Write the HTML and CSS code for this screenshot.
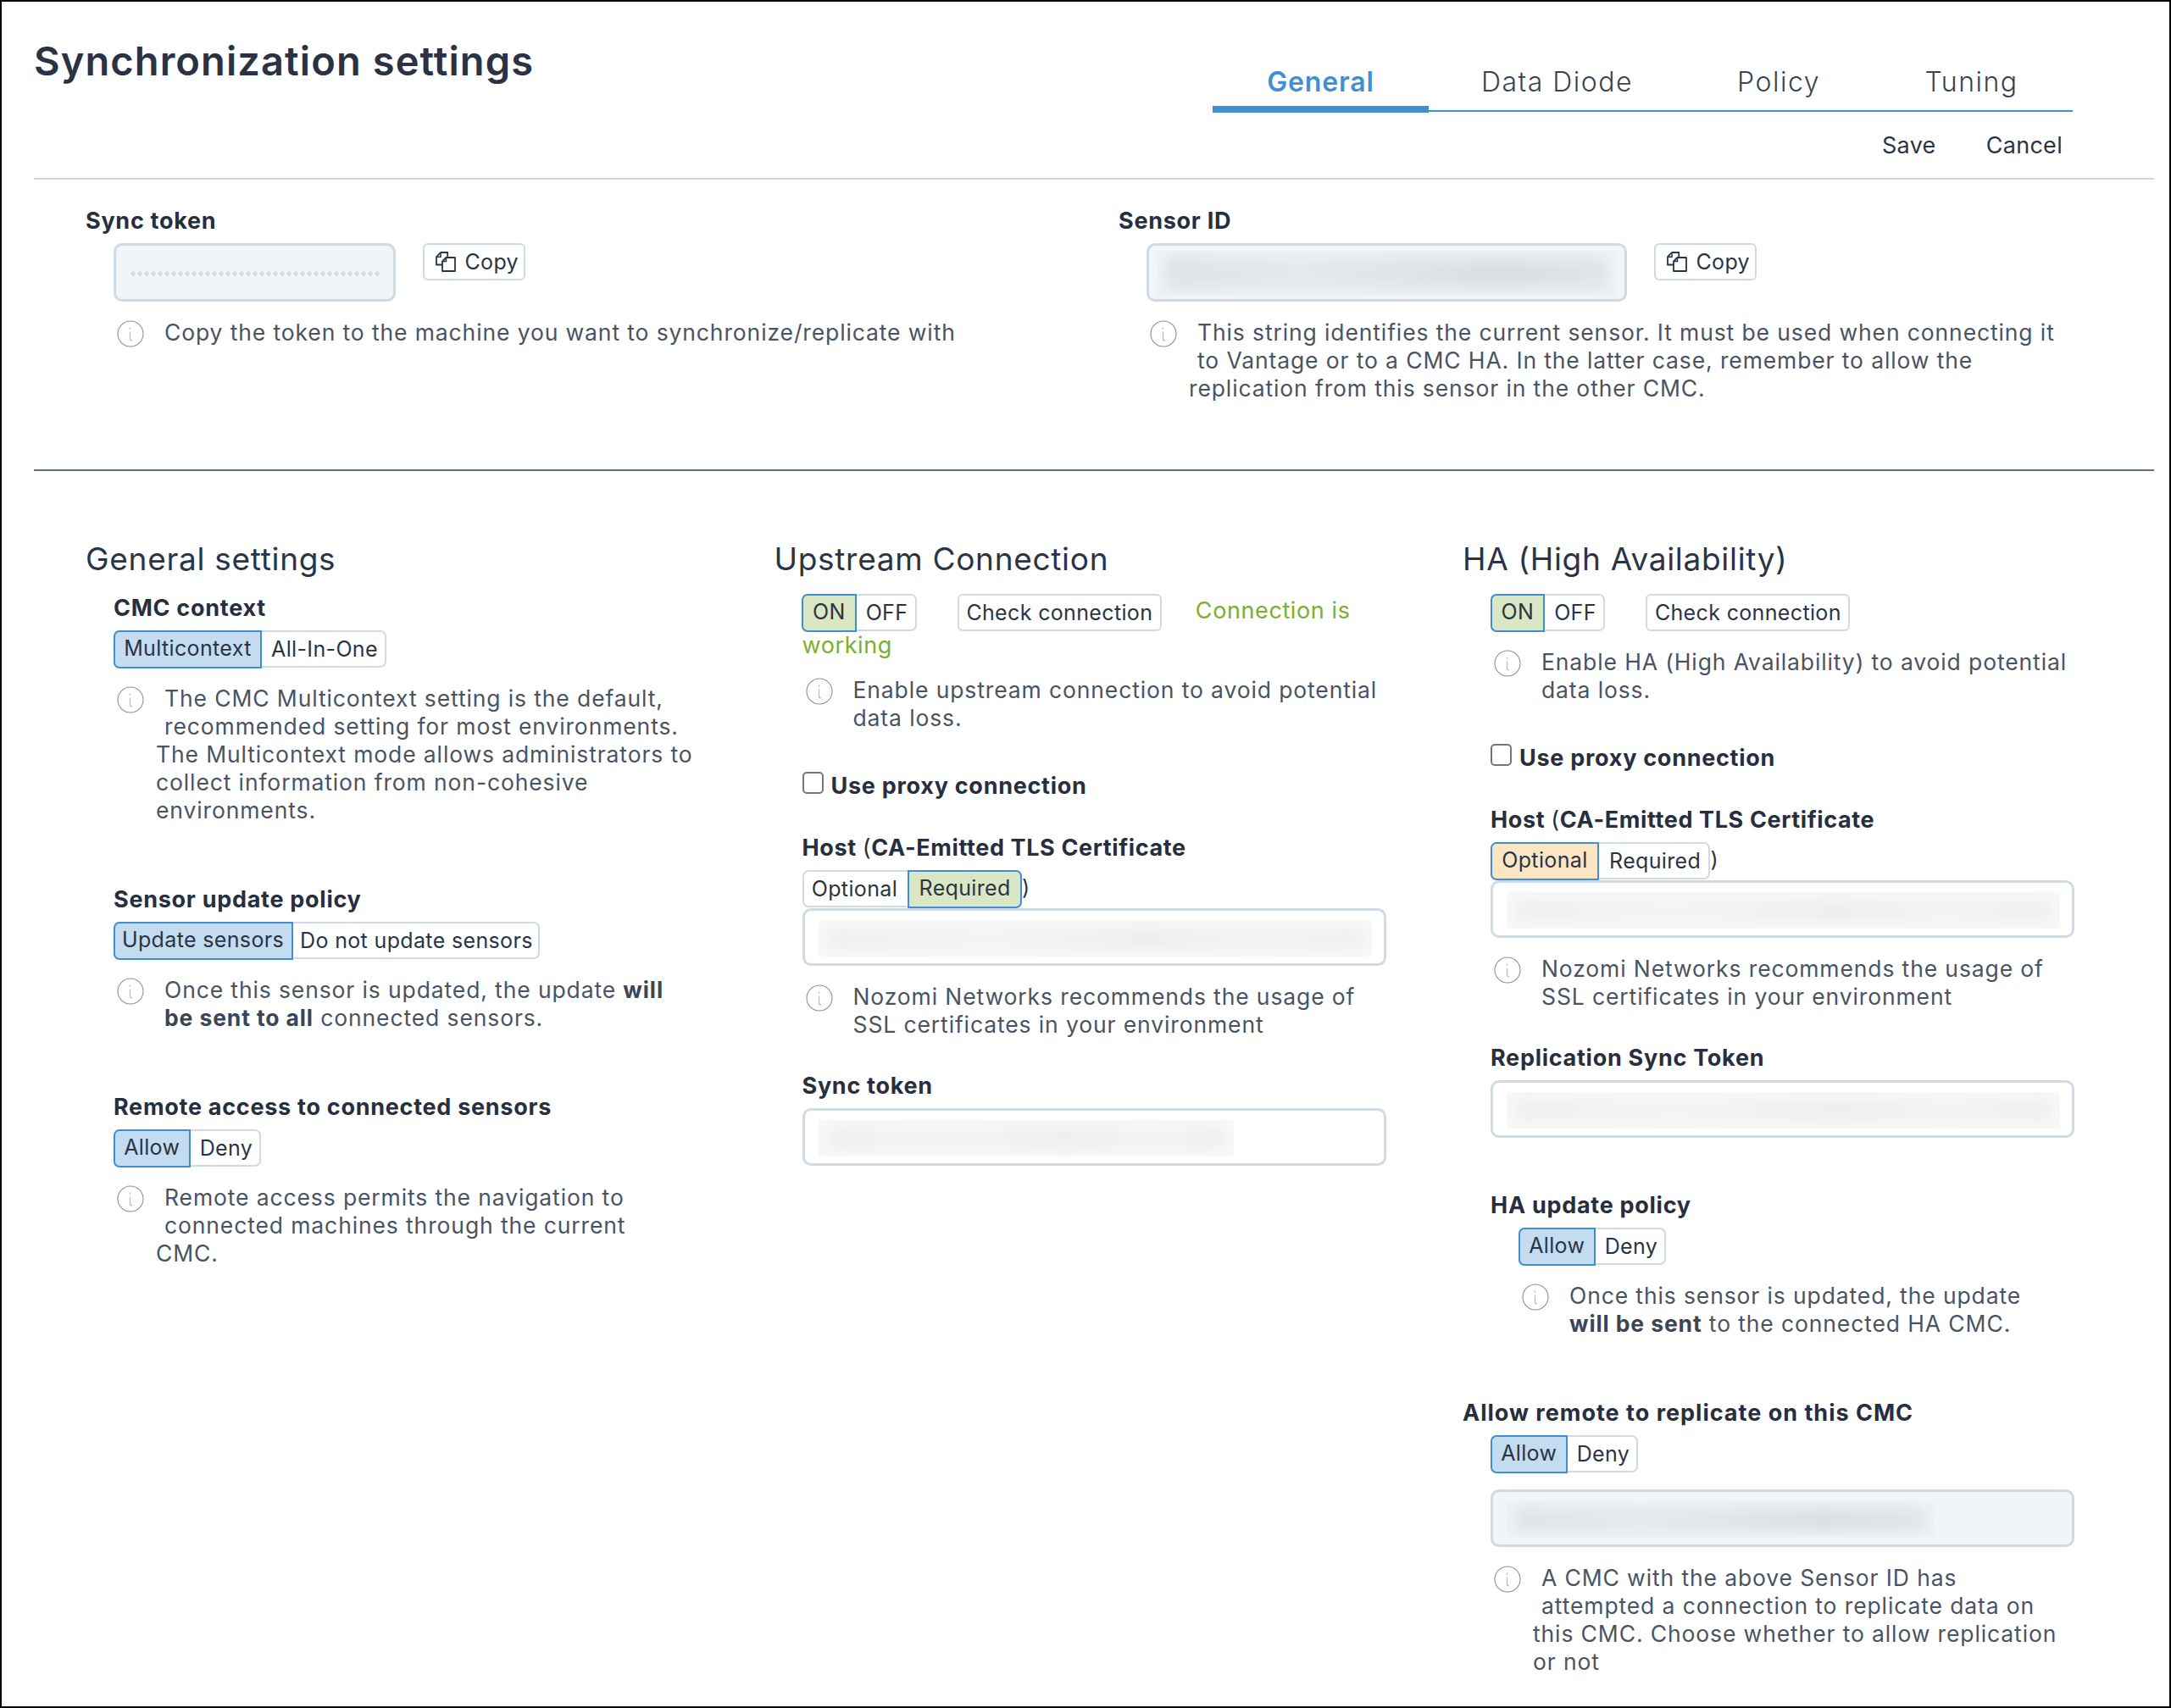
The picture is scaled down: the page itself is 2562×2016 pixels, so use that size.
FILE: index.html
```html
<!DOCTYPE html>
<html lang="en">
<head>
<meta charset="utf-8">
<title>Synchronization settings</title>
<link rel="stylesheet" href="styles.css">
</head>
<body>
<svg class="defs" width="0" height="0" aria-hidden="true">
  <symbol id="info" viewBox="0 0 32 32">
    <circle cx="16" cy="16" r="15" fill="none" stroke="#8b9098" stroke-width="1.1"/>
    <circle cx="15.5" cy="9.5" r="0.9" fill="#b4b8bd"/>
    <path d="M15.5 13.5v8.5q0 2 2.6 2" fill="none" stroke="#b4b8bd" stroke-width="1.2"/>
  </symbol>
  <symbol id="copy" viewBox="0 0 24 24">
    <path d="M8 15.5H1V6.2L6 1h8.2v6" fill="none" stroke="#2b3346" stroke-width="1.8" stroke-linejoin="round"/>
    <path d="M6 1.2v5H1.2" fill="none" stroke="#2b3346" stroke-width="1.5"/>
    <path d="M8 23V11.5L12.5 7H23v16z" fill="none" stroke="#2b3346" stroke-width="1.8" stroke-linejoin="round"/>
    <path d="M12.5 7.2v4.3H8.2" fill="none" stroke="#2b3346" stroke-width="1.5"/>
  </symbol>
</svg>
<main class="page">
  <header class="header">
    <h1 class="title">Synchronization settings</h1>
    <div class="header-side">
      <nav class="tabs">
        <a class="tab tab-active tab-general">General</a>
        <a class="tab tab-diode">Data Diode</a>
        <a class="tab tab-policy">Policy</a>
        <a class="tab tab-tuning">Tuning</a>
      </nav>
      <div class="actions"><a>Save</a><a>Cancel</a></div>
    </div>
  </header>

  <section class="tokens">
    <div>
      <div class="label">Sync token</div>
      <div class="indent">
        <div class="copy-row">
          <div class="box box-ro box-token"><span class="dots"></span></div>
          <button class="copy-btn"><svg class="copy-icon"><use href="#copy"/></svg>Copy</button>
        </div>
        <p class="hint"><span class="hint-icon"><svg><use href="#info"/></svg></span>Copy the token to the machine you want to synchronize/replicate with</p>
      </div>
    </div>
    <div>
      <div class="label">Sensor ID</div>
      <div class="indent">
        <div class="copy-row">
          <div class="box box-ro box-sensor"><div class="blob blob-dark"></div></div>
          <button class="copy-btn"><svg class="copy-icon"><use href="#copy"/></svg>Copy</button>
        </div>
        <p class="hint"><span class="hint-icon"><svg><use href="#info"/></svg></span>This string identifies the current sensor. It must be used when connecting it<br>to Vantage or to a CMC HA. In the latter case, remember to allow the<br>replication from this sensor in the other CMC.</p>
      </div>
    </div>
  </section>

  <section class="columns">
    <div class="col">
      <h2 class="heading">General settings</h2>
      <div class="indent first-setting">
        <div class="label">CMC context</div>
        <div class="seg"><span class="seg-on on-blue">Multicontext</span><span>All-In-One</span></div>
        <p class="hint"><span class="hint-icon"><svg><use href="#info"/></svg></span>The CMC Multicontext setting is the default,<br>recommended setting for most environments.<br>The Multicontext mode allows administrators to<br>collect information from non-cohesive<br>environments.</p>
      </div>
      <div class="indent setting">
        <div class="label">Sensor update policy</div>
        <div class="seg seg-tight"><span class="seg-on on-blue">Update sensors</span><span>Do not update sensors</span></div>
        <p class="hint"><span class="hint-icon"><svg><use href="#info"/></svg></span>Once this sensor is updated, the update <b>will</b><br><b>be sent to all</b> connected sensors.</p>
      </div>
      <div class="indent setting">
        <div class="label">Remote access to connected sensors</div>
        <div class="seg"><span class="seg-on on-blue">Allow</span><span>Deny</span></div>
        <p class="hint"><span class="hint-icon"><svg><use href="#info"/></svg></span>Remote access permits the navigation to<br>connected machines through the current<br>CMC.</p>
      </div>
    </div>

    <div class="col">
      <h2 class="heading">Upstream Connection</h2>
      <div class="indent">
        <div class="conn-row">
          <div class="seg seg-onoff"><span class="seg-on on-green">ON</span><span>OFF</span></div>
          <button class="check-btn">Check connection</button>
          <span class="status">Connection is</span>
        </div>
        <div class="status status-wrap">working</div>
        <p class="hint"><span class="hint-icon"><svg><use href="#info"/></svg></span>Enable upstream connection to avoid potential<br>data loss.</p>
        <label class="proxy"><input type="checkbox">Use proxy connection</label>
        <div class="label host">Host <span class="paren">(</span>CA-Emitted TLS Certificate</div>
        <div class="seg-line"><div class="seg seg-roomy"><span>Optional</span><span class="seg-on on-green">Required</span></div><span class="paren-close">)</span></div>
        <div class="box box-tight box-host"><div class="blob"></div></div>
        <p class="hint"><span class="hint-icon"><svg><use href="#info"/></svg></span>Nozomi Networks recommends the usage of<br>SSL certificates in your environment</p>
        <div class="label host">Sync token</div>
        <div class="box box-sync"><div class="blob blob-sync"></div></div>
      </div>
    </div>

    <div class="col">
      <h2 class="heading">HA (High Availability)</h2>
      <div class="indent">
        <div class="conn-row">
          <div class="seg seg-onoff"><span class="seg-on on-green">ON</span><span>OFF</span></div>
          <button class="check-btn">Check connection</button>
        </div>
        <p class="hint"><span class="hint-icon"><svg><use href="#info"/></svg></span>Enable HA (High Availability) to avoid potential<br>data loss.</p>
        <label class="proxy"><input type="checkbox">Use proxy connection</label>
        <div class="label host">Host <span class="paren">(</span>CA-Emitted TLS Certificate</div>
        <div class="seg-line"><div class="seg seg-roomy"><span class="seg-on on-orange">Optional</span><span>Required</span></div><span class="paren-close">)</span></div>
        <div class="box box-tight box-host"><div class="blob"></div></div>
        <p class="hint"><span class="hint-icon"><svg><use href="#info"/></svg></span>Nozomi Networks recommends the usage of<br>SSL certificates in your environment</p>
        <div class="label host">Replication Sync Token</div>
        <div class="box box-sync"><div class="blob"></div></div>
        <div class="label ha-policy">HA update policy</div>
        <div class="indent">
          <div class="seg"><span class="seg-on on-blue">Allow</span><span>Deny</span></div>
          <p class="hint"><span class="hint-icon"><svg><use href="#info"/></svg></span>Once this sensor is updated, the update<br><b>will be sent</b> to the connected HA CMC.</p>
        </div>
      </div>
      <div class="setting">
        <div class="label label-wide">Allow remote to replicate on this CMC</div>
        <div class="indent">
          <div class="seg"><span class="seg-on on-blue">Allow</span><span>Deny</span></div>
          <div class="box box-ro box-remote"><div class="blob blob-dark blob-remote"></div></div>
          <p class="hint"><span class="hint-icon"><svg><use href="#info"/></svg></span>A CMC with the above Sensor ID has<br>attempted a connection to replicate data on<br>this CMC. Choose whether to allow replication<br>or not</p>
        </div>
      </div>
    </div>
  </section>
</main>
</body>
</html>
```

FILE: styles.css
```css
* { box-sizing: border-box; }
html, body { margin: 0; padding: 0; background: #fff; }
body { font-family: Inter, "Noto Sans", sans-serif; color: #2b3346; }
.defs { position: absolute; }

.page {
  width: 2562px;
  height: 2016px;
  border: 2px solid #000;
  padding: 0 18px 0 38px;
  background: #fff;
  overflow: hidden;
}

/* Header */
.header {
  display: flex;
  justify-content: space-between;
  height: 208px;
  padding-right: 96px;
}
.title {
  margin: 42px 0 0;
  font-size: 47px;
  line-height: 56px;
  font-weight: 600;
  color: #2a3244;
  letter-spacing: 1.1px;
}
.header-side { width: 1015px; padding-top: 73px; }
.tabs { display: flex; border-bottom: 2px solid #3f8fd2; height: 57px; }
.tab {
  height: 55px;
  padding-bottom: 11px;
  font-size: 32px;
  line-height: 44px;
  text-align: center;
  font-weight: 300;
  color: #3a4352;
  letter-spacing: 1.5px;
}
.tab-general { width: 255px; }
.tab-diode { width: 303px; }
.tab-policy { width: 220px; }
.tab-tuning { width: 235px; }
.tab-active {
  height: 65px;
  margin-top: -7px;
  padding-top: 7px;
  border-bottom: 8px solid #3f8fd2;
  color: #3f8fd2;
  font-weight: 600;
  letter-spacing: 0.85px;
}
.actions {
  display: flex;
  justify-content: flex-end;
  gap: 59px;
  margin-top: 20px;
  padding-right: 12px;
  font-size: 27px;
  line-height: 40px;
  letter-spacing: 0.3px;
  color: #2b3346;
}

/* Token row */
.tokens {
  display: grid;
  grid-template-columns: 1219px 1fr;
  height: 346px;
  border-top: 2px solid #ccd8e0;
  border-bottom: 2px solid #5c7082;
  padding: 31px 0 0 61px;
}
.label {
  font-size: 27px;
  line-height: 36px;
  font-weight: 700;
  letter-spacing: 0.72px;
  color: #262e40;
}
.label-wide { letter-spacing: 1px; }
.indent { padding-left: 33px; }
.copy-row { display: flex; align-items: flex-start; gap: 32px; margin-top: 8px; }
.box {
  width: 689px;
  height: 68px;
  border: 3px solid #cfdbe4;
  border-radius: 10px;
  background: #fff;
  padding: 11px 14px 8px 16px;
}
.box-ro { background: #f2f5f8; }
.box-token { width: 333px; height: 69px; padding: 0 14px 0 17px; display: flex; align-items: center; }
.box-sensor { width: 567px; height: 69px; padding: 6px 9px 4px 9px; }
.dots {
  display: block;
  width: 296px;
  height: 6px;
  margin-top: 2px;
  background: radial-gradient(circle at 3px 3px, #d4dfe6 2.6px, transparent 3px) 0 0 / 8px 6px repeat-x;
}
.copy-btn, .check-btn {
  height: 44px;
  border: 2.5px solid #cfdbe4;
  border-radius: 6px;
  background: #fff;
  font: inherit;
  font-size: 25px;
  line-height: 36px;
  letter-spacing: 0.35px;
  color: #2b3346;
  padding: 0;
}
.copy-btn { display: flex; align-items: center; gap: 11px; width: 121px; padding-left: 12.5px; }
.copy-icon { width: 24px; height: 24px; flex: none; }

/* Hints */
.hint {
  margin: 20px 0 0;
  padding-left: 50px;
  font-size: 26.5px;
  line-height: 33px;
  letter-spacing: 0.88px;
  color: #4a5363;
}
.hint b { font-weight: 700; color: #3c4555; }
.hint-icon { float: left; width: 10px; height: 50px; }
.hint-icon svg { display: block; width: 32px; height: 32px; margin: 2px 0 0 -46px; }

/* Columns */
.columns {
  display: grid;
  grid-template-columns: repeat(3, 812.5px);
  padding: 82px 0 0 61px;
}
.heading {
  margin: 0 0 19px;
  font-size: 37px;
  line-height: 44px;
  font-weight: 400;
  letter-spacing: 0.7px;
  color: #2b3346;
}
.first-setting { margin-top: -1px; }
.setting { margin-top: 71px; }

/* Segmented toggles */
.seg {
  display: inline-flex;
  height: 44px;
  margin-top: 8px;
  vertical-align: top;
  border: 2.5px solid #cfdbe4;
  border-radius: 7px;
  background: #fff;
  font-size: 25px;
  line-height: 39px;
  letter-spacing: 0.35px;
  color: #2b3346;
}
.seg > span { padding: 0 10.7px; margin: -2.5px 0; line-height: 44px; white-space: nowrap; }
.seg-tight > span { padding: 0 8.5px; }
.seg-roomy > span { padding: 0 11.75px; }
.seg-onoff > span { padding: 0 11px; }
.seg > span:first-child { margin-left: -2.5px; border-radius: 7px 0 0 7px; }
.seg > span:last-child { margin-right: -2.5px; border-radius: 0 7px 7px 0; }
.seg-on { border: 2.5px solid #3f8fd2; line-height: 39px !important; }
.on-blue { background: #c3dcf0; }
.on-green { background: #d9e7c4; }
.on-orange { background: #fbe5c2; }

.conn-row { display: flex; align-items: flex-start; }
.conn-row .seg { margin-top: 0; }
.check-btn { width: 241px; margin-left: 48px; }
.status { color: #7ab02f; font-size: 27px; line-height: 40px; letter-spacing: 0.6px; }
.conn-row .status { margin-left: 40px; }
.status-wrap { line-height: 34px; height: 33px; }

.proxy {
  display: flex;
  align-items: flex-start;
  gap: 9px;
  margin-top: 46px;
  font-size: 27px;
  line-height: 36px;
  font-weight: 700;
  letter-spacing: 0.72px;
  color: #262e40;
}
.proxy input {
  appearance: none;
  width: 25px;
  height: 26px;
  margin: 1px 0 0;
  border: 2px solid #767676;
  border-radius: 5px;
  background: #fff;
}
.host { margin-top: 38px; }
.proxy + .host { margin-top: 37px; letter-spacing: 0.62px; }
.paren { font-weight: 400; }
.seg-line { display: flex; align-items: flex-start; }
.paren-close { margin-top: 8px; font-size: 25px; line-height: 40px; }
.box-tight { margin-top: 1px; }
.box-sync { margin-top: 8px; }
.box-remote { margin-top: 20px; }

/* Redacted values */
.blob {
  position: relative;
  height: 100%;
  overflow: hidden;
  background: #f8f8f8;
}
.blob::before {
  content: "";
  position: absolute;
  inset: 8px 10px;
  border-radius: 10px;
  background: linear-gradient(90deg, #efefef, #f3f3f3 30%, #eeeeee 60%, #f2f2f2 80%, #efefef);
  filter: blur(7px);
}
.blob-dark { background: #eff2f4; }
.blob-dark::before {
  background: linear-gradient(90deg, #dfe3e6, #e6e9ec 30%, #e0e4e7 55%, #dcdfe2 75%, #e2e5e8);
}
.blob-sync { width: 490px; }
.blob-remote { width: 505px; }
.ha-policy { margin-top: 62px; }
```
